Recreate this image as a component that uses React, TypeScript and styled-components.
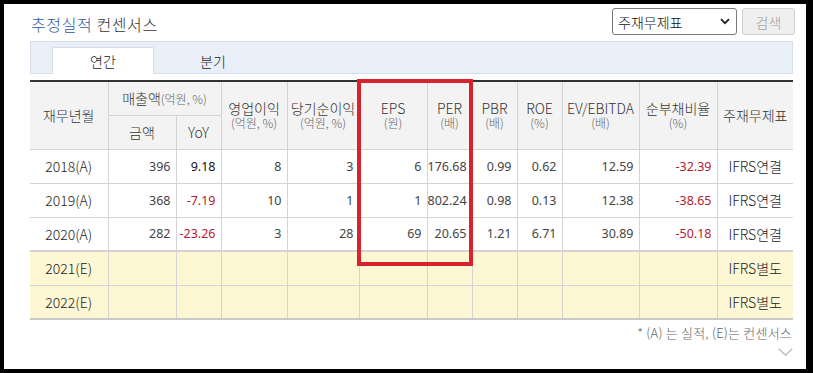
import React from "react";
import styled, { createGlobalStyle } from "styled-components";

type Row = {
  period: string;
  values: (string | null)[];
  report: string;
  estimate?: boolean;
};

const rows: Row[] = [
  {
    period: "2018(A)",
    values: ["396", "9.18", "8", "3", "6", "176.68", "0.99", "0.62", "12.59", "-32.39"],
    report: "IFRS연결",
  },
  {
    period: "2019(A)",
    values: ["368", "-7.19", "10", "1", "1", "802.24", "0.98", "0.13", "12.38", "-38.65"],
    report: "IFRS연결",
  },
  {
    period: "2020(A)",
    values: ["282", "-23.26", "3", "28", "69", "20.65", "1.21", "6.71", "30.89", "-50.18"],
    report: "IFRS연결",
  },
  { period: "2021(E)", values: Array(10).fill(null), report: "IFRS별도", estimate: true },
  { period: "2022(E)", values: Array(10).fill(null), report: "IFRS별도", estimate: true },
];

const colWidths = [78, 68, 45, 66, 72, 68, 45, 45, 45, 77, 78, 76];

const metricHeaders = [
  { name: "영업이익", unit: "(억원, %)" },
  { name: "당기순이익", unit: "(억원, %)" },
  { name: "EPS", unit: "(원)" },
  { name: "PER", unit: "(배)" },
  { name: "PBR", unit: "(배)" },
  { name: "ROE", unit: "(%)" },
  { name: "EV/EBITDA", unit: "(배)" },
  { name: "순부채비율", unit: "(%)" },
];

const App: React.FC = () => {
  const [tab, setTab] = React.useState("annual");

  return (
    <>
      <GlobalStyle />
      <FrameStyled>
        <HeaderStyled>
          <TitleStyled>
            <span>추정실적</span> 컨센서스
          </TitleStyled>
          <ControlsStyled>
            <SelectStyled>
              주재무제표
              <svg width="10" height="7" viewBox="0 0 10 7">
                <path d="M1 1.2 L5 5.2 L9 1.2" fill="none" stroke="#222" strokeWidth="1.8" />
              </svg>
            </SelectStyled>
            <SearchButtonStyled disabled>검색</SearchButtonStyled>
          </ControlsStyled>
        </HeaderStyled>

        <TabBarStyled>
          <TabStyled active={tab === "annual"} onClick={() => setTab("annual")}>
            연간
          </TabStyled>
          <TabStyled active={tab === "quarter"} onClick={() => setTab("quarter")}>
            분기
          </TabStyled>
        </TabBarStyled>

        <TableWrapperStyled>
          <TableStyled>
            <colgroup>
              {colWidths.map((w, i) => (
                <col key={i} style={{ width: w }} />
              ))}
            </colgroup>
            <thead>
              <tr>
                <HeadCell rowSpan={2}>재무년월</HeadCell>
                <HeadCell colSpan={2} short>
                  매출액<UnitStyled inline>(억원, %)</UnitStyled>
                </HeadCell>
                {metricHeaders.map((h) => (
                  <HeadCell key={h.name} rowSpan={2}>
                    {h.name}
                    <UnitStyled>{h.unit}</UnitStyled>
                  </HeadCell>
                ))}
                <HeadCell rowSpan={2}>주재무제표</HeadCell>
              </tr>
              <tr>
                <HeadCell short>금액</HeadCell>
                <HeadCell short>YoY</HeadCell>
              </tr>
            </thead>
            <tbody>
              {rows.map((r, ri) => (
                <BodyRow key={r.period} estimate={r.estimate} firstEstimate={r.estimate && !rows[ri - 1].estimate}>
                  <LabelCell>{r.period}</LabelCell>
                  {r.values.map((v, i) => (
                    <NumberCell key={i} negative={!!v && v.startsWith("-")} strong={ri === 0 && i === 1}>
                      {v}
                    </NumberCell>
                  ))}
                  <LabelCell>{r.report}</LabelCell>
                </BodyRow>
              ))}
            </tbody>
          </TableStyled>
          <HighlightStyled />
        </TableWrapperStyled>

        <FootnoteStyled>* (A) 는 실적, (E)는 컨센서스</FootnoteStyled>
        <MoreStyled>
          <svg width="15" height="8" viewBox="0 0 15 8">
            <path d="M0.7 0.7 L7.5 7.2 L14.3 0.7" fill="none" stroke="#b8b8b8" strokeWidth="1.2" />
          </svg>
        </MoreStyled>
      </FrameStyled>
    </>
  );
};

export default App;

const GlobalStyle = createGlobalStyle`
  html, body {
    margin: 0;
    padding: 0;
    background: #000;
  }
  body {
    font-family: "Noto Sans CJK KR", "Noto Sans", sans-serif;
    font-weight: 300;
    color: #333;
  }
  * {
    box-sizing: border-box;
  }
`;

const FrameStyled = styled.div`
  background: #fff;
  margin: 4px 7px 0 4px;
  height: 365px;
  padding: 4px 13px 0 26px;
  display: flex;
  flex-direction: column;
`;

const HeaderStyled = styled.div`
  display: flex;
  align-items: center;
  justify-content: space-between;
  height: 27px;
`;

const TitleStyled = styled.h2`
  margin: 5px 0 0 1px;
  font-size: 16px;
  font-weight: 300;
  color: #333;
  letter-spacing: 0.6px;

  span {
    color: #2f5aa8;
  }
`;

const ControlsStyled = styled.div`
  display: flex;
  gap: 5px;
  margin-right: -2px;
`;

const SelectStyled = styled.div`
  width: 125px;
  height: 27px;
  border: 1px solid #7a7a7a;
  border-radius: 3px;
  display: flex;
  align-items: center;
  justify-content: space-between;
  padding: 0 6px 0 5px;
  font-size: 14px;
  color: #111;
  background: #fff;
`;

const SearchButtonStyled = styled.button`
  width: 53px;
  height: 27px;
  border: 1px solid #cfcfcf;
  border-radius: 3px;
  background: #efefef;
  color: #a3a3a3;
  font-family: inherit;
  font-weight: 300;
  font-size: 14px;
  padding: 0;
`;

const TabBarStyled = styled.div`
  margin-top: 6px;
  height: 33px;
  background: #e9eff9;
  border: 1px solid #d6deea;
  display: flex;
  align-items: flex-end;
  padding-left: 21px;
  gap: 8px;
`;

const TabStyled = styled.div<{ active?: boolean }>`
  width: 102px;
  height: 27px;
  margin-bottom: -1px;
  display: flex;
  align-items: center;
  justify-content: center;
  font-size: 14px;
  color: #222;
  cursor: pointer;
  background: ${(p) => (p.active ? "#fff" : "transparent")};
  border: 1px solid ${(p) => (p.active ? "#d6deea" : "transparent")};
  border-bottom: none;
`;

const TableWrapperStyled = styled.div`
  position: relative;
  margin-top: 6px;
`;

const TableStyled = styled.table`
  width: 763px;
  table-layout: fixed;
  border-collapse: collapse;
  border-top: 2px solid #333;
  border-bottom: 2px solid #c9c9c9;
`;

const HeadCell = styled.th<{ short?: boolean }>`
  background: #f3f3f3;
  border: 1px solid #d4d4d4;
  border-top: none;
  font-weight: 300;
  font-size: 14px;
  color: #333;
  line-height: 16px;
  height: ${(p) => (p.short ? "34px" : "auto")};
  padding: 0;
  white-space: nowrap;

  &:first-child {
    border-left: none;
  }
  &:last-child {
    border-right: none;
  }
`;

const UnitStyled = styled.span<{ inline?: boolean }>`
  display: ${(p) => (p.inline ? "inline" : "block")};
  font-size: 12px;
  line-height: 14px;
  color: #666;
`;

const BodyRow = styled.tr<{ estimate?: boolean; firstEstimate?: boolean }>`
  height: 34px;
  background: ${(p) => (p.estimate ? "#fdf7d4" : "#fff")};
  border-top: ${(p) => (p.firstEstimate ? "2px solid #d3d3d3" : "none")};
`;

const LabelCell = styled.td`
  border: 1px solid #d4d4d4;
  text-align: center;
  font-size: 14px;
  color: #222;
  padding: 0;
  white-space: nowrap;

  &:first-child {
    border-left: none;
  }
  &:last-child {
    border-right: none;
  }
`;

const NumberCell = styled.td<{ negative?: boolean; strong?: boolean }>`
  border: 1px solid #d4d4d4;
  text-align: right;
  padding: 0 5px 0 0;
  font-family: "Noto Sans", "Liberation Sans", sans-serif;
  font-weight: 400;
  font-size: 12.5px;
  color: ${(p) => (p.negative ? "#b3202f" : p.strong ? "#111" : "#444")};
`;

const HighlightStyled = styled.div`
  position: absolute;
  left: 327px;
  top: -1px;
  width: 116px;
  height: 187px;
  border: 4px solid #d8232e;
  pointer-events: none;
`;

const FootnoteStyled = styled.div`
  align-self: flex-end;
  margin-top: 3px;
  margin-right: 1px;
  font-size: 13px;
  color: #666;
  letter-spacing: 0.2px;
`;

const MoreStyled = styled.div`
  align-self: flex-end;
  margin-top: 6px;
  margin-right: 0;
  display: flex;
`;
